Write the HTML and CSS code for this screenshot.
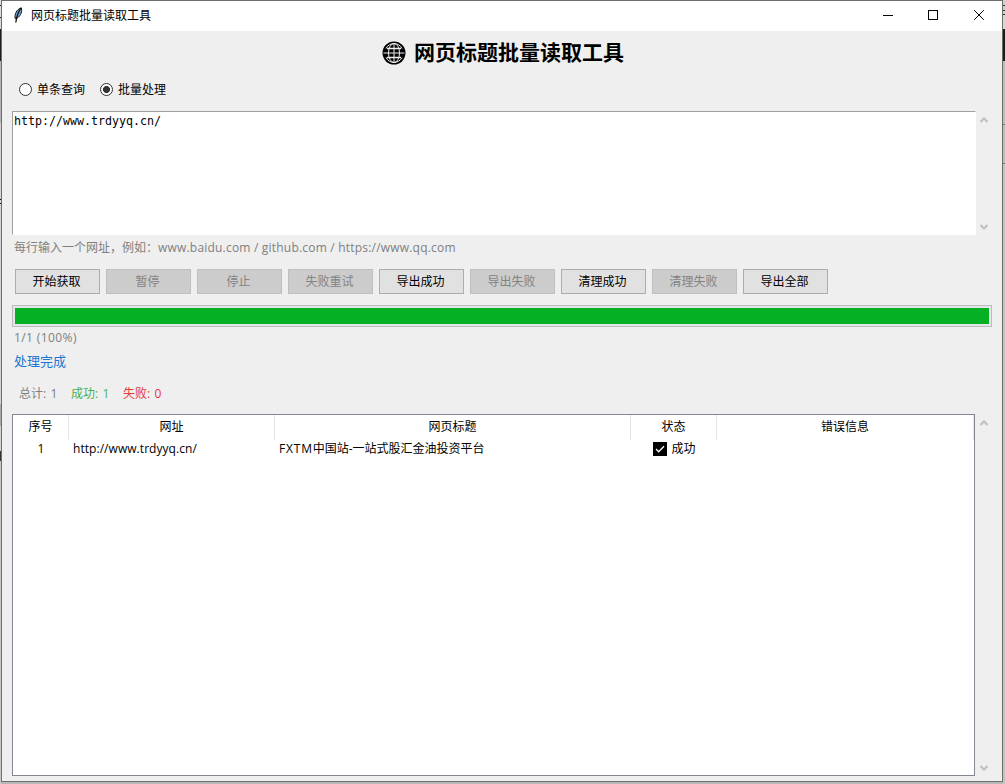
FILE: index.html
```html
<!DOCTYPE html>
<html lang="zh-CN">
<head>
    <meta charset="UTF-8">
    <meta name="viewport" content="width=device-width, initial-scale=1.0">
    <title>网页标题批量读取工具</title>
    <link rel="stylesheet" href="styles.css">
</head>
<body>
    <div class="window">
        <header class="titlebar">
            <svg class="feather" width="10" height="16" viewBox="0 0 10 16">
                <path d="M2.200 11.500C1.200 7.500 3.800 2 8.300.8c1 3.200.2 7.400-4.600 10.700z" fill="#6fa3d8" stroke="#111" stroke-width="1"/>
                <path d="M8 1.200C5.500 4.500 3.800 8 2.800 15.500" fill="none" stroke="#111" stroke-width="1.300"/>
            </svg>
            <span class="caption">网页标题批量读取工具</span>
            <svg class="controls" width="102" height="11" viewBox="0 0 102 11" fill="none" stroke="#000">
                <path d="M0 5.500h10"/>
                <rect x="45.500" y=".5" width="9" height="9"/>
                <path d="M91.200.2l9.600 9.600M100.800.2l-9.600 9.600"/>
            </svg>
        </header>

        <main>
            <h1>
                <svg class="globe" width="24" height="24" viewBox="0 0 24 24" fill="none">
                    <circle cx="12" cy="12" r="11.500" fill="#000"/>
                    <g stroke="#efefef" stroke-width="1">
                        <path d="M4 7.500C5.500 4.500 8.500 2.500 12 2.500s6.500 2 8 5M4 16.500c1.500 3 4.500 5 8 5s6.500-2 8-5"/>
                        <ellipse cx="12" cy="12" rx="5.500" ry="9.500"/>
                        <path d="M12 2.500v19M1.500 12h21"/>
                        <path d="M5 7.500h14M5 16.500h14" stroke-width="1.500"/>
                    </g>
                </svg>
                <span>网页标题批量读取工具</span>
            </h1>

            <div class="modes">
                <label><i class="radio"></i>单条查询</label>
                <label><i class="radio checked"></i>批量处理</label>
            </div>

            <div class="input-row">
                <div class="urls">http://www.trdyyq.cn/</div>
                <div class="scrollbar">
                    <svg width="8" height="6" viewBox="0 0 8 6"><path d="M.5 5L4 1.500 7.500 5"/></svg>
                    <svg width="8" height="6" viewBox="0 0 8 6"><path d="M.5 1L4 4.500 7.500 1"/></svg>
                </div>
            </div>
            <p class="hint">每行输入一个网址，例如：<span class="latin">www.baidu.com / github.com / https://www.qq.com</span></p>

            <div class="toolbar">
                <button>开始获取</button>
                <button disabled>暂停</button>
                <button disabled>停止</button>
                <button disabled>失败重试</button>
                <button>导出成功</button>
                <button disabled>导出失败</button>
                <button>清理成功</button>
                <button disabled>清理失败</button>
                <button>导出全部</button>
            </div>

            <div class="progress"><div class="bar" style="width: 100%"></div></div>
            <p class="count">1/1 (100%)</p>
            <p class="status">处理完成</p>

            <div class="stats">
                <span class="total">总计<b>: 1</b></span>
                <span class="ok">成功<b>: 1</b></span>
                <span class="fail">失败<b>: 0</b></span>
            </div>

            <div class="results">
                <div class="table">
                    <div class="row head">
                        <span>序号</span><span>网址</span><span>网页标题</span><span>状态</span><span>错误信息</span>
                    </div>
                    <div class="row">
                        <span>1</span>
                        <span class="left url">http://www.trdyyq.cn/</span>
                        <span class="left"><span class="brand">FXTM</span>中国站-一站式股汇金油投资平台</span>
                        <span class="state">
                            <svg width="14" height="14" viewBox="0 0 14 14"><rect width="14" height="14"/><path d="M3 7l2.700 2.700L11 4.200" fill="none" stroke="#fff" stroke-width="1.300"/></svg>
                            成功
                        </span>
                        <span></span>
                    </div>
                </div>
                <div class="scrollbar">
                    <svg width="8" height="6" viewBox="0 0 8 6"><path d="M.5 5L4 1.500 7.500 5"/></svg>
                    <svg width="8" height="6" viewBox="0 0 8 6"><path d="M.5 1L4 4.500 7.500 1"/></svg>
                </div>
            </div>
        </main>
    </div>
</body>
</html>
```
FILE: styles.css
```css
* {
    box-sizing: border-box;
}
body {
    margin: 0;
    padding-left: 1px;
    height: 784px;
    overflow: hidden;
    /* desktop showing around the window edges */
    background:
        linear-gradient(#e0e0e0 0 5px, #222 5px 6px, #e0e0e0 6px 17px, #222 17px 18px, #d8d8d8 18px 29px, #1b1b1b 29px 61px, #b4b4b4 61px 123px, #d4d4d4 123px 199px, #111 199px 200px, #d4d4d4 200px 203px, #111 203px 204px, #d4d4d4 204px 404px, #aaa 404px 426px, #d4d4d4 426px 451px, #333 451px 461px, #c8c8c8 461px) left / 1px 100% no-repeat,
        linear-gradient(#d0d0d0 0 5px, #333 5px 6px, #d0d0d0 6px 10px, #333 10px 11px, #d0d0d0 11px 14px, #333 14px 15px, #d8d8d8 15px 29px, #1b1b1b 29px 61px, #bdbdbd 61px 124px, #777 124px 125px, #bdbdbd 125px 163px, #777 163px 164px, #c2c2c2 164px) right / 2px 100% no-repeat,
        #b8b8b8;
    font-family: "Open Sans", "Noto Sans CJK SC", sans-serif;
    font-size: 12px;
    color: #000;
}
.window {
    display: flex;
    flex-direction: column;
    width: 1002px;
    height: 782px;
    border: 1px solid #6e6e6e;
    background: #efefef;
}
.titlebar {
    display: flex;
    align-items: center;
    height: 30px;
    padding: 0 17px 0 11px;
    background: #fff;
}
.feather {
    margin-bottom: 2px;
}
.caption {
    margin: 0 0 2px 8px;
}
.controls {
    margin: 0 0 1px auto;
}
main {
    flex: 1;
    display: flex;
    flex-direction: column;
    padding: 0 10px 5px;
}
h1 {
    display: flex;
    align-items: center;
    justify-content: center;
    gap: 8px;
    height: 44px;
    margin: 0;
    padding-left: 2px;
    font-size: 21px;
    line-height: 43px;
}
h1 span {
    margin-bottom: 2px;
}
.modes {
    display: flex;
    gap: 15px;
    height: 28px;
    padding-left: 7px;
}
.modes label {
    display: flex;
    align-items: center;
    gap: 5px;
}
.radio {
    width: 13px;
    height: 13px;
    border: 1px solid #333;
    border-radius: 50%;
    background: #fff;
}
.radio.checked {
    background: radial-gradient(circle, #333 3.2px, #fff 3.8px);
}
.input-row {
    display: flex;
    height: 124px;
    margin-top: 8px;
}
.urls {
    width: 964px;
    padding: 1px;
    border: 1px solid #fff;
    border-top-color: #a0a0a0;
    border-left-color: #a0a0a0;
    background: #fff;
    font-family: "DejaVu Sans Mono", monospace;
    font-size: 11.63px;
    line-height: 16px;
}
.scrollbar {
    display: flex;
    flex-direction: column;
    justify-content: space-between;
    align-items: center;
    width: 15px;
    padding: 6px 0 5px;
}
.scrollbar path {
    fill: none;
    stroke: #bfbfbf;
    stroke-width: 2;
}
p {
    margin: 0;
    padding-left: 2px;
}
.hint {
    height: 25px;
    line-height: 25px;
    color: #808080;
}
.hint .latin {
    letter-spacing: 0.2px;
}
.toolbar {
    display: flex;
    gap: 6px;
    margin-top: 9px;
    padding-left: 3px;
}
button {
    width: 85px;
    height: 25px;
    padding: 0 2px 1px 0;
    border: 1px solid #adadad;
    background: #e1e1e1;
    color: #000;
    font: inherit;
}
button:disabled {
    border-color: #bfbfbf;
    background: #cccccc;
    color: #838383;
}
.progress {
    height: 22px;
    margin-top: 11px;
    padding: 2px;
    border: 1px solid #bcbcbc;
    background: #e6e6e6;
}
.bar {
    height: 16px;
    background: #06b025;
}
.count {
    height: 23px;
    line-height: 22px;
    letter-spacing: 0.4px;
    color: #808080;
}
.status {
    height: 24px;
    font-size: 13px;
    line-height: 23px;
    color: #1976d2;
}
.stats {
    display: flex;
    gap: 13px;
    height: 40px;
    padding-left: 7px;
    line-height: 39px;
}
.stats b {
    font-weight: normal;
    letter-spacing: 0.6px;
}
.total {
    color: #808080;
}
.ok {
    color: #4caf50;
}
.fail {
    color: #e53935;
}
.results {
    flex: 1;
    display: flex;
}
.table {
    width: 963px;
    border: 1px solid #828790;
    background: #fff;
}
.results .scrollbar {
    width: 17px;
}
.row {
    display: grid;
    grid-template-columns: 56px 206px 356px 86px 257px;
    height: 20px;
    line-height: 18px;
    text-align: center;
}
.row.head {
    height: 25px;
    line-height: 23px;
}
.head span {
    border-right: 1px solid #e5e5e5;
}
.left {
    padding-left: 4px;
    text-align: left;
}
.url {
    letter-spacing: 0.05px;
}
.brand {
    letter-spacing: 0.8px;
}
.state {
    display: flex;
    align-items: center;
    justify-content: center;
    gap: 4px;
    height: 18px;
    padding-left: 1px;
}
```
